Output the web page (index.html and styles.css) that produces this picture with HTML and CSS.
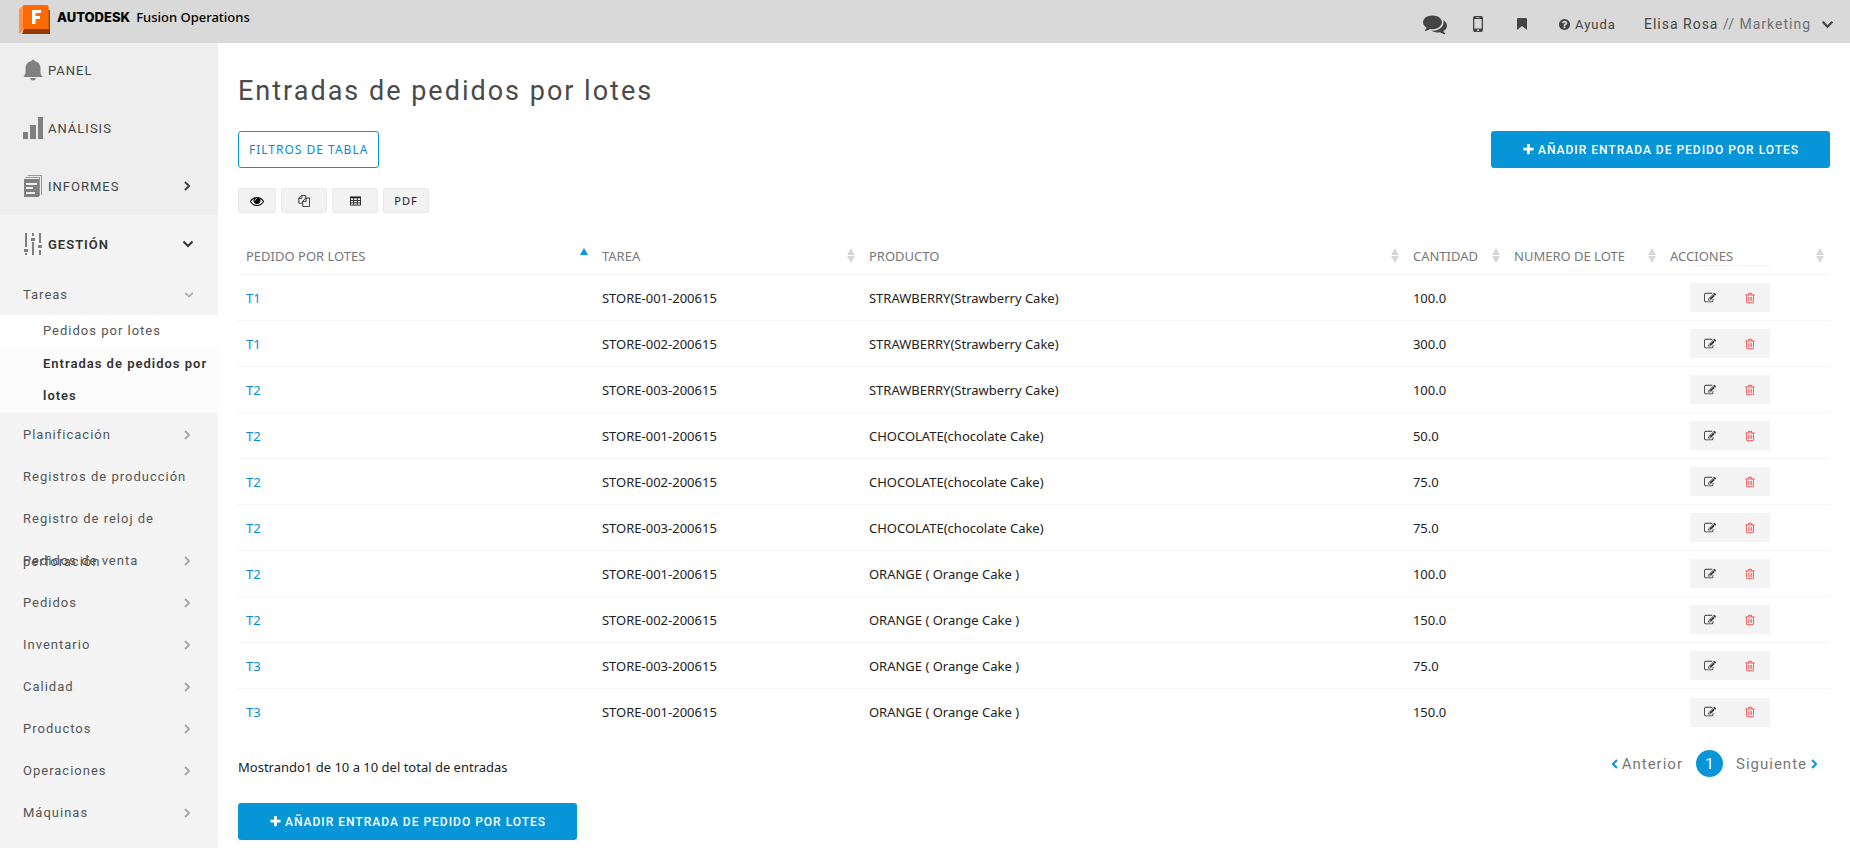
FILE: index.html
```html
<!DOCTYPE html>
<html lang="es">
<head>
<meta charset="utf-8">
<title>Entradas de pedidos por lotes</title>
<link rel="stylesheet" href="styles.css">
</head>
<body>
<svg class="defs" aria-hidden="true">
  <symbol id="plus" viewBox="0 0 1792 1792"><path d="M1600 736v192q0 40-28 68t-68 28h-416v416q0 40-28 68t-68 28h-192q-40 0-68-28t-28-68v-416h-416q-40 0-68-28t-28-68v-192q0-40 28-68t68-28h416v-416q0-40 28-68t68-28h192q40 0 68 28t28 68v416h416q40 0 68 28t28 68z"/></symbol>
  <symbol id="trash" viewBox="0 0 1792 1792"><path d="M704 736v576q0 14-9 23t-23 9h-64q-14 0-23-9t-9-23v-576q0-14 9-23t23-9h64q14 0 23 9t9 23zm256 0v576q0 14-9 23t-23 9h-64q-14 0-23-9t-9-23v-576q0-14 9-23t23-9h64q14 0 23 9t9 23zm256 0v576q0 14-9 23t-23 9h-64q-14 0-23-9t-9-23v-576q0-14 9-23t23-9h64q14 0 23 9t9 23zm128 724v-948h-896v948q0 22 7 40.5t14.5 27 10.500 8.500h832q3 0 10.500-8.500t14.500-27 7-40.500zm-672-1076h448l-48-117q-7-9-17-11h-317q-10 2-17 11zm928 32v64q0 14-9 23t-23 9h-96v948q0 83-47 143.500t-113 60.500h-832q-66 0-113-58.500t-47-141.500v-952h-96q-14 0-23-9t-9-23v-64q0-14 9-23t23-9h309l70-167q15-37 54-63t79-26h320q40 0 79 26t54 63l70 167h309q14 0 23 9t9 23z"/></symbol>
  <symbol id="edit" viewBox="0 0 1792 1792"><path d="M888 1184l116-116-152-152-116 116v56h96v96h56zm440-720q-16-16-33 1l-350 350q-17 17-1 33t33-1l350-350q17-17 1-33zm80 594v190q0 119-84.500 203.500t-203.500 84.500h-832q-119 0-203.500-84.500t-84.500-203.500v-832q0-119 84.500-203.500t203.500-84.500h832q63 0 117 25 15 7 18 23 3 17-9 29l-49 49q-14 14-32 8-23-6-45-6h-832q-66 0-113 47t-47 113v832q0 66 47 113t113 47h832q66 0 113-47t47-113v-126q0-13 9-22l64-64q15-15 35-7t20 29zm-96-738l288 288-672 672h-288v-288zm444 132l-92 92-288-288 92-92q28-28 68-28t68 28l152 152q28 28 28 68t-28 68z"/></symbol>
  <symbol id="help" viewBox="0 0 1792 1792"><path d="M1024 1376v-192q0-14-9-23t-23-9h-192q-14 0-23 9t-9 23v192q0 14 9 23t23 9h192q14 0 23-9t9-23zm256-672q0-88-55.500-163t-138.500-116-170-41q-243 0-371 213-15 24 8 42l132 100q7 6 19 6 16 0 25-12 53-68 86-92 34-24 86-24 48 0 85.500 26t37.500 59q0 38-20 61t-68 45q-63 28-115.500 86.500t-52.500 125.500v36q0 14 9 23t23 9h192q14 0 23-9t9-23q0-19 21.500-49.500t54.500-49.500q32-18 49-28.500t46-35 44.500-48 28-60.500 12.500-81zm384 192q0 209-103 385.500t-279.500 279.500-385.500 103-385.500-103-279.500-279.500-103-385.500 103-385.500 279.500-279.500 385.500-103 385.500 103 279.500 279.500 103 385.500z"/></symbol>
  <symbol id="eye" viewBox="0 0 1792 1792"><path d="M1664 960q-152-236-381-353 61 104 61 225 0 185-131.500 316.500t-316.500 131.500-316.500-131.500-131.500-316.500q0-121 61-225-229 117-381 353 133 205 333.500 326.500t434.500 121.500 434.500-121.500 333.500-326.500zm-720-384q0-20-14-34t-34-14q-125 0-214.500 89.500t-89.500 214.500q0 20 14 34t34 14 34-14 14-34q0-86 61-147t147-61q20 0 34-14t14-34zm848 384q0 34-20 69-140 230-376.500 368.500t-499.500 138.500-499.500-139-376.500-368q-20-35-20-69t20-69q140-229 376.500-368t499.500-139 499.500 139 376.500 368q20 35 20 69z"/></symbol>
  <symbol id="comments" viewBox="0 0 1792 1792"><path d="M1408 768q0 139-94 257t-256.500 186.500-353.500 68.500q-86 0-176-16-124 88-278 128-36 9-86 16h-3q-11 0-20.500-8t-11.500-21q-1-3-1-6.500t.5-6.500 2-6l2.500-5 3.500-5.500 4-5 4.500-5 4-4.500q5-6 23-25t26-29.500 22.500-29 25-38.500 20.500-44q-124-72-195-177t-71-224q0-139 94-257t256.500-186.500 353.500-68.500 353.500 68.500 256.500 186.500 94 257zm384 256q0 120-71 224.500t-195 176.500q10 24 20.500 44t25 38.500 22.500 29 26 29.500 23 25q1 1 4 4.500t4.500 5 4 5 3.500 5.500l2.500 5 2 6 .5 6.500-1 6.500q-3 14-13 22t-22 7q-50-7-86-16-154-40-278-128-90 16-176 16-271 0-472-132 58 4 88 4 161 0 309-45t264-129q125-92 192-212t67-254q0-77-23-152 129 71 204 178t75 230z"/></symbol>
  <symbol id="phone" viewBox="0 0 10 16"><path fill-rule="evenodd" d="M2 0h6a2 2 0 0 1 2 2v12a2 2 0 0 1-2 2H2a2 2 0 0 1-2-2V2a2 2 0 0 1 2-2zM1.300 3v9.500h7.400V3zM3.500 1.200v.7h3v-.7zM5 13.300a1 1 0 1 0 0 2a1 1 0 0 0 0-2z"/></symbol>
  <symbol id="bookmark" viewBox="0 0 10 12"><path d="M0 1a1 1 0 0 1 1-1h8a1 1 0 0 1 1 1v11L5 8l-5 4z"/></symbol>
  <symbol id="files" viewBox="0 0 14 14"><path fill="none" stroke="currentColor" d="M9 3.500V.5H4L1 3.500v6h4M4.500.5V4H1M5.500 7.500L9 3.500h4.500v10h-8zM9.500 3.500v4h-4"/></symbol>
  <symbol id="grid" viewBox="0 0 12 10"><path fill="none" stroke="currentColor" d="M.5 1v8.500h11V1M.5 4.500h11M.5 7h11M4 1v8M8 1v8"/><path d="M0 0h12v2H0z"/></symbol>
  <symbol id="chev" viewBox="0 0 6 10"><path class="line" d="M1 1l4 4-4 4"/></symbol>
  <symbol id="chevd" viewBox="0 0 12 8"><path class="line" d="M1.500 1.500L6 6l4.500-4.500"/></symbol>
  <symbol id="sort" viewBox="0 0 8 15"><path d="M4 0l4 7H0zM0 8h8l-4 7z"/></symbol>
  <symbol id="asc" viewBox="0 0 8 15"><path d="M4 0l4 7H0z"/></symbol>
</svg>

<header class="topbar">
  <a class="brand" href="#">
    <svg class="logo" viewBox="0 0 31 29" aria-hidden="true"><path fill="#ff934a" d="M0 4l5-4v25l-5 4z"/><path fill="#943c00" d="M3 29l2-5h24l2-3v8z"/><path fill="#b34500" d="M29 5h2v19h-2z"/><path fill="#ff6b00" d="M4 1.500Q4 0 5.500 0H28q1.500 0 1.500 1.500V24H4z"/><path fill="#fff" d="M13 5h9v3h-5.500v3h4.500v3h-4.500v5H13z"/></svg>
    <span class="maker">AUTODESK</span><span class="product">Fusion Operations</span>
  </a>
  <nav class="tools" aria-label="Herramientas">
    <button class="tool" aria-label="Mensajes"><svg class="i-comments"><use href="#comments"/></svg></button>
    <button class="tool" aria-label="Móvil"><svg class="i-phone"><use href="#phone"/></svg></button>
    <button class="tool" aria-label="Marcadores"><svg class="i-bookmark"><use href="#bookmark"/></svg></button>
    <a class="tool help" href="#"><svg class="i-help"><use href="#help"/></svg>Ayuda</a>
    <button class="tool user"><span>Elisa Rosa <span class="dept">// Marketing</span></span><svg class="i-down"><use href="#chevd"/></svg></button>
  </nav>
</header>

<div class="layout">
  <nav class="sidebar" aria-label="Principal">
    <div class="top-group">
      <a class="main-item" href="#"><svg viewBox="0 0 20 22"><path d="M8.500 2a1.500 1.500 0 0 1 3 0c4 .8 6 4 6 7.500v5L19.500 18H.5l2-3.500v-5C2.500 6 4.500 2.800 8.500 2zM7 19h6q-.5 2.500-3 2.500T7 19z"/></svg>PANEL</a>
      <a class="main-item" href="#"><svg viewBox="0 0 20 22"><path d="M0 15h5v7H0zM7 8h6v14H7zM15 0h5v22h-5z"/></svg>ANÁLISIS</a>
      <a class="main-item" href="#"><svg viewBox="0 0 20 22"><path d="M5 0h14v20h-1V1H4.500zM3 2h14v19h-1V3H2z" opacity=".8"/><path fill-rule="evenodd" d="M1 4h15v18H1zM3 8v2h11V8zM3 12v2h7v-2zM3 17v2h9v-2z"/></svg>INFORMES<svg class="arrow"><use href="#chev"/></svg></a>
    </div>
    <a class="main-item open" href="#"><svg viewBox="0 0 20 22"><path d="M2 0h2v14H2zM1 16h4v3H1zM2 20h2v2H2zM9 0h2v3H9zM8 5h4v3H8zM9 9h2v13H9zM16 0h2v10h-2zM15 12h4v3h-4zM16 17h2v5h-2z"/></svg>GESTIÓN<svg class="arrow down"><use href="#chevd"/></svg></a>
    <a class="sub-item" href="#">Tareas<svg class="arrow down"><use href="#chevd"/></svg></a>
    <a class="leaf" href="#">Pedidos por lotes</a>
    <a class="leaf current" href="#">Entradas de pedidos por lotes</a>
    <a class="sub-item" href="#">Planificación<svg class="arrow"><use href="#chev"/></svg></a>
    <a class="sub-item" href="#">Registros de producción</a>
    <a class="sub-item" href="#">Registro de reloj de perforación</a>
    <a class="sub-item" href="#">Pedidos de venta<svg class="arrow"><use href="#chev"/></svg></a>
    <a class="sub-item" href="#">Pedidos<svg class="arrow"><use href="#chev"/></svg></a>
    <a class="sub-item" href="#">Inventario<svg class="arrow"><use href="#chev"/></svg></a>
    <a class="sub-item" href="#">Calidad<svg class="arrow"><use href="#chev"/></svg></a>
    <a class="sub-item" href="#">Productos<svg class="arrow"><use href="#chev"/></svg></a>
    <a class="sub-item" href="#">Operaciones<svg class="arrow"><use href="#chev"/></svg></a>
    <a class="sub-item" href="#">Máquinas<svg class="arrow"><use href="#chev"/></svg></a>
  </nav>

  <main class="content">
    <h1>Entradas de pedidos por lotes</h1>
    <div class="actions-bar">
      <button class="outline">FILTROS DE TABLA</button>
      <button class="primary"><svg><use href="#plus"/></svg>AÑADIR ENTRADA DE PEDIDO POR LOTES</button>
    </div>
    <div class="exports">
      <button class="export narrow" aria-label="Columnas"><svg class="i-eye"><use href="#eye"/></svg></button>
      <button class="export" aria-label="Copiar"><svg class="i-files"><use href="#files"/></svg></button>
      <button class="export" aria-label="Hoja de cálculo"><svg class="i-grid"><use href="#grid"/></svg></button>
      <button class="export">PDF</button>
    </div>
    <table>
      <colgroup><col class="c-order"><col class="c-task"><col class="c-product"><col class="c-qty"><col class="c-lot"><col class="c-act"></colgroup>
      <thead><tr>
        <th><div class="th">PEDIDO POR LOTES<svg class="asc"><use href="#asc"/></svg></div></th>
        <th><div class="th">TAREA<svg><use href="#sort"/></svg></div></th>
        <th><div class="th">PRODUCTO<svg><use href="#sort"/></svg></div></th>
        <th><div class="th">CANTIDAD<svg><use href="#sort"/></svg></div></th>
        <th><div class="th">NUMERO DE LOTE<svg><use href="#sort"/></svg></div></th>
        <th class="last"><div class="th">ACCIONES<svg><use href="#sort"/></svg></div></th>
      </tr></thead>
      <tbody>
        <tr><td><a href="#">T1</a></td><td>STORE-001-200615</td><td>STRAWBERRY(Strawberry Cake)</td><td>100.0</td><td></td><td><div class="row-actions"><button aria-label="Editar"><svg><use href="#edit"/></svg></button><button class="del" aria-label="Eliminar"><svg><use href="#trash"/></svg></button></div></td></tr>
        <tr><td><a href="#">T1</a></td><td>STORE-002-200615</td><td>STRAWBERRY(Strawberry Cake)</td><td>300.0</td><td></td><td><div class="row-actions"><button aria-label="Editar"><svg><use href="#edit"/></svg></button><button class="del" aria-label="Eliminar"><svg><use href="#trash"/></svg></button></div></td></tr>
        <tr><td><a href="#">T2</a></td><td>STORE-003-200615</td><td>STRAWBERRY(Strawberry Cake)</td><td>100.0</td><td></td><td><div class="row-actions"><button aria-label="Editar"><svg><use href="#edit"/></svg></button><button class="del" aria-label="Eliminar"><svg><use href="#trash"/></svg></button></div></td></tr>
        <tr><td><a href="#">T2</a></td><td>STORE-001-200615</td><td>CHOCOLATE(chocolate Cake)</td><td>50.0</td><td></td><td><div class="row-actions"><button aria-label="Editar"><svg><use href="#edit"/></svg></button><button class="del" aria-label="Eliminar"><svg><use href="#trash"/></svg></button></div></td></tr>
        <tr><td><a href="#">T2</a></td><td>STORE-002-200615</td><td>CHOCOLATE(chocolate Cake)</td><td>75.0</td><td></td><td><div class="row-actions"><button aria-label="Editar"><svg><use href="#edit"/></svg></button><button class="del" aria-label="Eliminar"><svg><use href="#trash"/></svg></button></div></td></tr>
        <tr><td><a href="#">T2</a></td><td>STORE-003-200615</td><td>CHOCOLATE(chocolate Cake)</td><td>75.0</td><td></td><td><div class="row-actions"><button aria-label="Editar"><svg><use href="#edit"/></svg></button><button class="del" aria-label="Eliminar"><svg><use href="#trash"/></svg></button></div></td></tr>
        <tr><td><a href="#">T2</a></td><td>STORE-001-200615</td><td>ORANGE ( Orange Cake )</td><td>100.0</td><td></td><td><div class="row-actions"><button aria-label="Editar"><svg><use href="#edit"/></svg></button><button class="del" aria-label="Eliminar"><svg><use href="#trash"/></svg></button></div></td></tr>
        <tr><td><a href="#">T2</a></td><td>STORE-002-200615</td><td>ORANGE ( Orange Cake )</td><td>150.0</td><td></td><td><div class="row-actions"><button aria-label="Editar"><svg><use href="#edit"/></svg></button><button class="del" aria-label="Eliminar"><svg><use href="#trash"/></svg></button></div></td></tr>
        <tr><td><a href="#">T3</a></td><td>STORE-003-200615</td><td>ORANGE ( Orange Cake )</td><td>75.0</td><td></td><td><div class="row-actions"><button aria-label="Editar"><svg><use href="#edit"/></svg></button><button class="del" aria-label="Eliminar"><svg><use href="#trash"/></svg></button></div></td></tr>
        <tr><td><a href="#">T3</a></td><td>STORE-001-200615</td><td>ORANGE ( Orange Cake )</td><td>150.0</td><td></td><td><div class="row-actions"><button aria-label="Editar"><svg><use href="#edit"/></svg></button><button class="del" aria-label="Eliminar"><svg><use href="#trash"/></svg></button></div></td></tr>
      </tbody>
    </table>
    <div class="table-foot">
      <p>Mostrando1 de 10 a 10 del total de entradas</p>
      <nav class="pager" aria-label="Paginación">
        <a href="#"><svg class="prev"><use href="#chev"/></svg>Anterior</a>
        <a class="page" href="#">1</a>
        <a href="#">Siguiente<svg><use href="#chev"/></svg></a>
      </nav>
    </div>
    <button class="primary"><svg><use href="#plus"/></svg>AÑADIR ENTRADA DE PEDIDO POR LOTES</button>
  </main>
</div>
</body>
</html>
```
FILE: styles.css
```css
* { box-sizing: border-box; }
body {
  display: flex;
  flex-direction: column;
  min-height: 100vh;
  margin: 0;
  font-family: "Noto Sans", sans-serif;
  font-size: 13px;
  color: #222;
  background: #fff;
}
a { color: inherit; text-decoration: none; }
button { font: inherit; color: inherit; border: 0; background: none; padding: 0; cursor: pointer; }
svg { fill: currentColor; flex: none; }
.defs { display: none; }
.line { fill: none; stroke: currentColor; stroke-width: 2; }

.topbar {
  display: flex;
  justify-content: space-between;
  height: 43px;
  background: #d9d9d9;
}
.brand { display: flex; padding: 5px 0 0 19px; color: #000; line-height: 24px; }
.logo { width: 31px; height: 29px; margin-right: 7px; }
.maker { font-family: Inter, sans-serif; font-weight: 800; margin-right: 6px; }
.product { font-weight: 500; }
.tools { display: flex; align-items: center; padding: 5px 16px 0 0; color: #444; font-family: Roboto, sans-serif; }
.tool { display: flex; align-items: center; letter-spacing: 1px; }
.i-comments { width: 24px; height: 24px; margin-right: 26px; }
.i-phone { width: 10px; height: 16px; margin-right: 34px; }
.i-bookmark { width: 10px; height: 12px; margin-right: 31px; }
.i-help { width: 13px; height: 13px; margin-right: 4px; }
.help { margin-right: 28px; }
.user { gap: 10px; font-size: 14px; }
.dept { color: #707070; }
.i-down { width: 13px; height: 9px; }

.layout { display: flex; flex: 1; }
.sidebar {
  flex: none;
  width: 218px;
  background: #f4f4f4;
  color: #555;
  font-family: Roboto, sans-serif;
  letter-spacing: 1px;
}
.top-group { display: grid; gap: 4px; padding-bottom: 2px; background: #eee; }
.main-item { display: flex; align-items: center; height: 54px; padding: 0 24px 0 23px; gap: 5px; color: #444; }
.main-item > svg:first-child { width: 20px; height: 22px; color: #808080; }
.main-item.open { height: 58px; font-weight: 600; color: #333; }
.arrow { width: 6px; height: 10px; margin-left: auto; margin-right: 4px; }
.arrow.down { width: 12px; height: 8px; margin-right: 0; }
.sub-item {
  display: flex;
  height: 42px;
  line-height: 43px;
  padding: 0 24px 0 23px;
}
.sub-item .arrow { margin-top: 17px; color: #aaa; }
.sub-item .arrow.down { width: 10px; margin-top: 18px; }
.leaf { display: block; line-height: 32px; padding: 0 8px 1px 43px; background: #fff; }
.leaf.current { background: #fcfcfc; font-weight: 600; color: #333; }

.content { flex: 1; min-width: 0; padding: 30px 20px 8px; }
h1 { margin: 0 0 22px; font-family: Roboto, sans-serif; font-size: 27px; line-height: 36px; font-weight: 400; letter-spacing: 2px; color: #4a4a4a; }
.actions-bar { display: flex; justify-content: space-between; margin-bottom: 20px; }
.outline {
  height: 37px;
  padding: 0 10px;
  border: 1px solid #0696d7;
  border-radius: 3px;
  color: #0a8bd0;
  font-size: 12px;
  letter-spacing: 1px;
}
.primary {
  display: inline-flex;
  align-items: center;
  justify-content: center;
  gap: 3px;
  width: 339px;
  height: 37px;
  border-radius: 3px;
  background: #0696d7;
  color: #fff;
  font-family: Roboto, sans-serif;
  font-size: 12px;
  font-weight: 500;
  letter-spacing: 1px;
}
.primary svg { width: 13px; height: 13px; }
.exports { display: flex; gap: 5px; margin-bottom: 24px; }
.export {
  display: flex;
  align-items: center;
  justify-content: center;
  width: 46px;
  height: 25px;
  border: 1px solid #e8e8e8;
  border-radius: 3px;
  background: #f2f2f2;
  font-size: 11px;
  letter-spacing: 1px;
}
.export.narrow { width: 38px; color: #000; }
.i-eye { width: 14px; height: 14px; }
.i-files { width: 12px; height: 12px; }
.i-grid { width: 11px; height: 10px; }

table { width: 100%; table-layout: fixed; border-collapse: separate; border-spacing: 0; }
.c-order { width: 22.36%; }
.c-task { width: 16.77%; }
.c-product { width: 34.17%; }
.c-qty { width: 6.35%; }
.c-lot { width: 9.8%; }
.c-act { width: 10.55%; }
th, td { padding: 0 6px 0 8px; text-align: left; border-bottom: 1px solid #f4f4f4; white-space: nowrap; }
th { height: 38px; font-weight: 400; color: #777; }
.th { display: flex; align-items: center; justify-content: space-between; }
.th svg { width: 8px; height: 15px; color: #d8d8d8; }
.th .asc { color: #0696d7; }
th.last { position: relative; }
th.last::after { content: ""; position: absolute; left: 28px; top: 28px; width: 80px; height: 1px; background: #f1f1f1; }
td { height: 46px; }
td a { color: #0a8bd0; }
tbody tr:last-child td { border-bottom: 0; }
.row-actions { display: flex; width: 80px; height: 29px; margin-left: 20px; background: #f4f4f4; }
.row-actions button { flex: 1; display: flex; align-items: center; justify-content: center; color: #333; }
.row-actions svg { width: 12px; height: 12px; }
.row-actions .del { color: #eb5555; }

.table-foot { display: flex; justify-content: space-between; align-items: flex-start; margin-bottom: 26px; }
.table-foot p { margin: 23px 0 0; line-height: 18px; }
.pager { display: flex; align-items: center; gap: 13px; padding: 15px 13px 0 0; font-family: Roboto, sans-serif; font-size: 15px; letter-spacing: 1px; color: #777; }
.pager a { display: flex; align-items: center; gap: 4px; }
.pager svg { width: 6px; height: 10px; color: #0696d7; }
.pager .prev { transform: rotate(180deg); }
.pager .page { justify-content: center; width: 27px; height: 27px; border-radius: 50%; background: #0696d7; color: #fff; letter-spacing: 0; }
```
